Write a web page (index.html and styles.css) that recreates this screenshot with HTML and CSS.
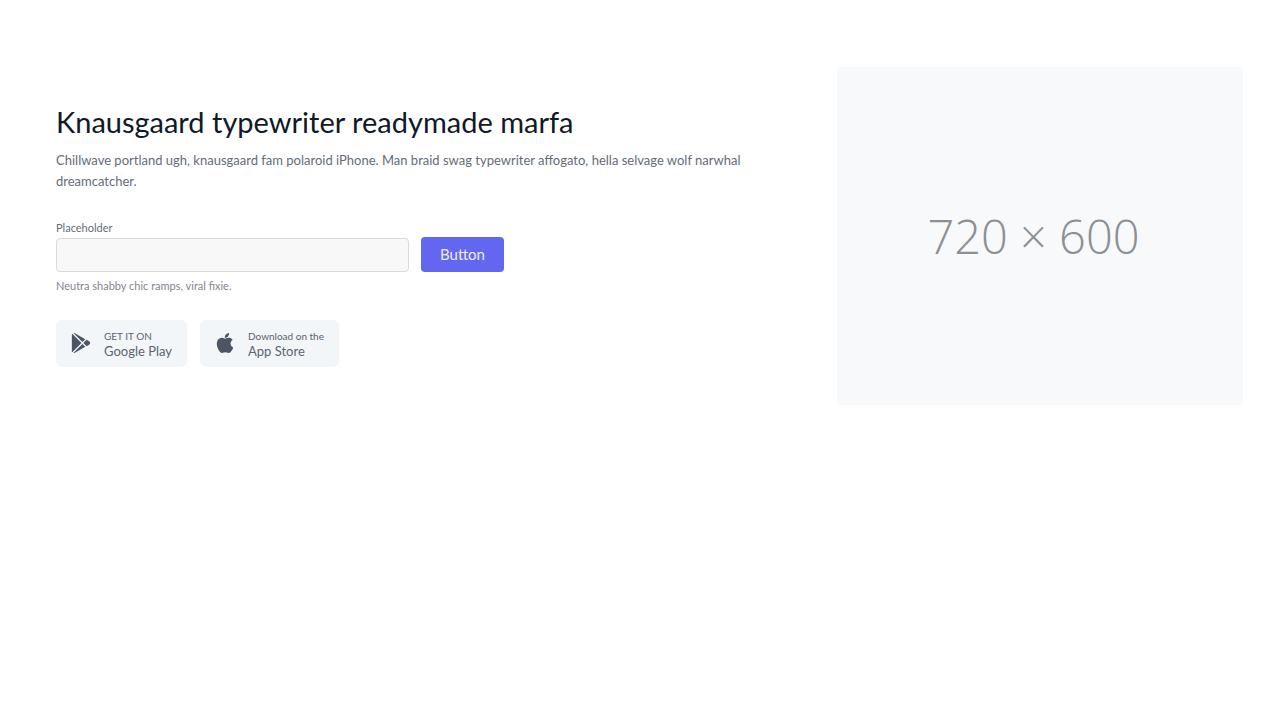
FILE: index.html
```html
<!DOCTYPE html>
<html lang="en">
<head>
<meta charset="utf-8">
<meta name="viewport" content="width=device-width, initial-scale=1">
<title>Knausgaard typewriter readymade marfa</title>
<link rel="stylesheet" href="styles.css">
</head>
<body>
<main class="hero">
  <section class="intro">
    <h1 class="title">Knausgaard typewriter readymade marfa</h1>
    <p class="lead">Chillwave portland ugh, knausgaard fam polaroid iPhone. Man braid swag typewriter affogato, hella selvage wolf narwhal dreamcatcher.</p>
    <form class="signup">
      <div class="field">
        <label class="label" for="hero-field">Placeholder</label>
        <input class="input" type="text" id="hero-field" name="hero-field">
      </div>
      <button class="submit" type="button">Button</button>
    </form>
    <p class="note">Neutra shabby chic ramps, viral fixie.</p>
    <div class="stores">
      <button class="store" type="button">
        <svg class="store-icon" viewBox="0 0 512 512" fill="currentColor" aria-hidden="true">
          <path d="M99.617 8.057a50.191 50.191 0 00-38.815-6.713l230.932 230.933 74.846-74.846L99.617 8.057zM32.139 20.116c-6.441 8.563-10.148 19.077-10.148 30.199v411.358c0 11.123 3.708 21.636 10.148 30.199l235.877-235.877L32.139 20.116zM464.261 212.087l-67.266-37.637-81.544 81.544 81.548 81.548 67.273-37.64c16.117-9.03 25.738-25.442 25.738-43.908s-9.621-34.877-25.749-43.907zM291.733 279.711L60.815 510.629c3.786.891 7.639 1.371 11.492 1.371a50.275 50.275 0 0027.31-8.07l266.965-149.372-74.849-74.847z"/>
        </svg>
        <span class="store-text"><span class="store-small">GET IT ON</span><span class="store-name">Google Play</span></span>
      </button>
      <button class="store" type="button">
        <svg class="store-icon" viewBox="0 0 305 305" fill="currentColor" aria-hidden="true">
          <path d="M40.74 112.12c-25.79 44.74-9.4 112.65 19.12 153.82C74.09 286.52 88.5 305 108.24 305c.37 0 .74 0 1.13-.02 9.27-.37 15.97-3.23 22.45-5.99 7.27-3.1 14.8-6.3 26.6-6.3 11.22 0 18.39 3.1 25.31 6.1 6.83 2.95 13.87 6 24.26 5.81 22.23-.41 35.88-20.35 47.92-37.94a168.18 168.18 0 0021-43l.09-.28a2.5 2.5 0 00-1.33-3.06l-.18-.08c-3.92-1.6-38.26-16.84-38.62-58.36-.34-33.74 25.76-51.6 31-54.84l.24-.15a2.5 2.5 0 00.7-3.51c-18-26.37-45.62-30.34-56.73-30.82a50.04 50.04 0 00-4.95-.24c-13.06 0-25.56 4.93-35.61 8.9-6.94 2.73-12.93 5.09-17.06 5.09-4.64 0-10.67-2.4-17.65-5.16-9.33-3.7-19.9-7.9-31.1-7.9l-.79.01c-26.03.38-50.62 15.27-64.18 38.86z"/>
          <path d="M212.1 0c-15.76.64-34.67 10.35-45.97 23.58-9.6 11.13-19 29.68-16.52 48.38a2.5 2.5 0 002.29 2.17c1.06.08 2.15.12 3.23.12 15.41 0 32.04-8.52 43.4-22.25 11.94-14.5 17.99-33.1 16.16-49.77A2.52 2.52 0 00212.1 0z"/>
        </svg>
        <span class="store-text"><span class="store-small">Download on the</span><span class="store-name">App Store</span></span>
      </button>
    </div>
  </section>
  <div class="picture">720 × 600</div>
</main>
</body>
</html>
```
FILE: styles.css
```css
* {
  box-sizing: border-box;
}

body {
  margin: 0;
  background: #fff;
  color: #656c77;
  font-family: Lato, "Noto Sans", sans-serif;
  font-size: 13px;
  line-height: 21px;
}

h1,
p {
  margin: 0;
}

button,
input {
  font: inherit;
}

.hero {
  display: flex;
  align-items: center;
  justify-content: space-between;
  padding: 67px 37px 67px 56px;
}

.intro {
  flex: 0 1 690px;
}

.title {
  color: #111827;
  font-size: 29px;
  font-weight: 400;
  line-height: 32px;
  margin-bottom: 12px;
}

.lead {
  margin-bottom: 26px;
}

.signup {
  display: flex;
  align-items: flex-end;
  gap: 12px;
}

.field {
  flex: 0 1 353px;
}

.label {
  display: block;
  font-size: 11px;
  line-height: 20px;
}

.input {
  display: block;
  width: 100%;
  height: 34px;
  padding: 0 12px;
  border: 1px solid #d8dade;
  border-radius: 4px;
  background: #f8f8f9;
}

.submit {
  height: 35px;
  padding: 0 19px;
  border: 0;
  border-radius: 4px;
  background: #6366f1;
  color: #eeeffd;
  font-size: 15px;
}

.note {
  margin-top: 3px;
  margin-bottom: 24px;
  color: #7f858e;
  font-size: 11px;
}

.stores {
  display: flex;
  gap: 13px;
}

.store {
  display: flex;
  align-items: center;
  gap: 13px;
  height: 47px;
  padding: 0 15px;
  border: 0;
  border-radius: 6px;
  background: #f3f6f8;
  color: #5b6470;
}

.store-icon {
  width: 20px;
  height: 20px;
  color: #4b5563;
}

.store-text {
  display: flex;
  flex-direction: column;
  padding-top: 2px;
  text-align: left;
}

.store-small {
  font-size: 10px;
  line-height: 14px;
}

.store-name {
  font-size: 13px;
  line-height: 17px;
}

.picture {
  display: flex;
  align-items: center;
  justify-content: center;
  flex: 0 1 406px;
  aspect-ratio: 6 / 5;
  padding-right: 13px;
  border-radius: 4px;
  background: #f8f9fb;
  color: #8e8f91;
  font-family: "Open Sans", sans-serif;
  font-size: 47px;
  font-weight: 300;
}
```
